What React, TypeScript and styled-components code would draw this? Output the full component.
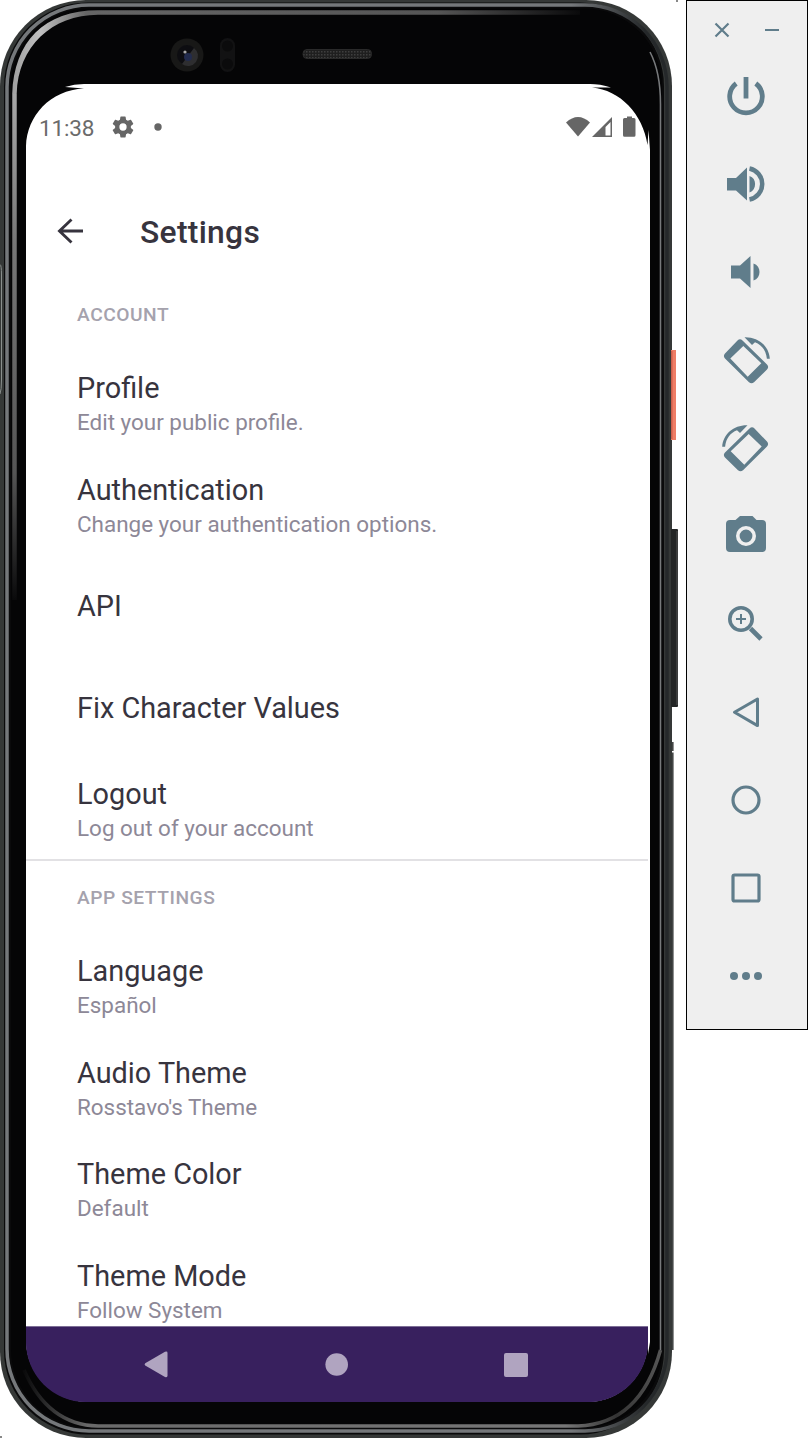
import React from "react";
import styled, { createGlobalStyle } from "styled-components";

const Global = createGlobalStyle`
  * { box-sizing: border-box; }
  body { margin: 0; background: #fff; font-family: Roboto, sans-serif; overflow: hidden; }
`;

const TEAL = "#607d8b";

const Page = styled.main`
  display: flex;
  align-items: flex-start;
  width: 808px;
  height: 1438px;
`;

const Phone = styled.section`
  position: relative;
  width: 686px;
  height: 1438px;
  padding: 84px 36px 36px 26px;
`;

const Skin = styled.svg`
  position: absolute;
  inset: 0;
`;

const Screen = styled.div`
  position: relative;
  display: flex;
  flex-direction: column;
  width: 622px;
  height: 1318px;
  border-radius: 62px 58px 60px 60px;
  overflow: hidden;
`;

const StatusBar = styled.div`
  display: flex;
  align-items: center;
  flex: none;
  height: 86px;
  padding: 0 11px 0 13px;
  color: #6b6b6b;
`;

const Clock = styled.span`
  width: 73px;
  font-size: 22.5px;
  letter-spacing: -0.15px;
  line-height: 28px;
  padding-top: 2px;
`;

const StatusIcons = styled.div`
  display: flex;
  align-items: center;
  margin-left: auto;
`;

const AppBar = styled.header`
  display: flex;
  align-items: center;
  flex: none;
  height: 106px;
  padding: 16px 0 0 29px;
  gap: 55px;
`;

const AppTitle = styled.h1`
  margin: 0;
  padding-top: 2px;
  color: #37343e;
  font-size: 31.8px;
  font-weight: 500;
  line-height: 40px;
  letter-spacing: 0.3px;
`;

const Content = styled.div`
  flex: 1;
  min-height: 0;
  overflow: hidden;
`;

const GroupTitle = styled.h2`
  display: flex;
  align-items: center;
  height: 76px;
  margin: 0;
  padding-left: 51px;
  color: #a5a2ad;
  font-size: 19.2px;
  font-weight: 500;
  letter-spacing: 0.54px;
`;

const Group = styled.section<{ $ruled?: boolean }>`
  border-top: ${(p) => (p.$ruled ? "2px solid #e2e1e4" : "none")};

  ${GroupTitle} {
    height: ${(p) => (p.$ruled ? "74px" : "76px")};
  }
`;

const Row = styled.div<{ $single?: boolean }>`
  display: flex;
  flex-direction: column;
  justify-content: center;
  height: 101.4px;
  padding: ${(p) => (p.$single ? "1.6px" : "3.4px")} 0 0 51px;
`;

const RowTitle = styled.span`
  color: #37343e;
  font-size: 28.85px;
  line-height: 36px;
`;

const RowNote = styled.span`
  color: #8d8897;
  font-size: 22.45px;
  line-height: 32px;
`;

const NavBar = styled.nav`
  display: flex;
  align-items: center;
  flex: none;
  height: 76px;
  padding: 0 0 0 118px;
  gap: 156px;
  background: #38205e;
  border-top: 1px solid #7d6f96;
`;

const Toolbar = styled.aside`
  display: flex;
  flex-direction: column;
  width: 122px;
  height: 1030px;
  background: #efefef;
  border: 1px solid #000;
`;

const WindowButtons = styled.div`
  display: flex;
  height: 51px;
  padding: 19px 0 0 25px;
  gap: 30px;
`;

const Tool = styled.button`
  display: flex;
  align-items: center;
  justify-content: center;
  width: 118px;
  height: 88px;
  padding: 0;
  border: 0;
  background: none;
`;

type Entry = { title: string; note?: string };

const account: Entry[] = [
  { title: "Profile", note: "Edit your public profile." },
  { title: "Authentication", note: "Change your authentication options." },
  { title: "API" },
  { title: "Fix Character Values" },
  { title: "Logout", note: "Log out of your account" },
];

const appSettings: Entry[] = [
  { title: "Language", note: "Español" },
  { title: "Audio Theme", note: "Rosstavo's Theme" },
  { title: "Theme Color", note: "Default" },
  { title: "Theme Mode", note: "Follow System" },
];

const Rows = ({ items }: { items: Entry[] }) => (
  <>
    {items.map((e) => (
      <Row key={e.title} $single={!e.note}>
        <RowTitle>{e.title}</RowTitle>
        {e.note && <RowNote>{e.note}</RowNote>}
      </Row>
    ))}
  </>
);

const DeviceSkin = () => (
  <Skin width="686" height="1438" viewBox="0 0 686 1438">
    <defs>
      <linearGradient id="topRim" gradientUnits="userSpaceOnUse" x1="12" y1="0" x2="580" y2="0">
        <stop offset="0" stopColor="#a0a0a0" />
        <stop offset="0.05" stopColor="#c0c0c0" />
        <stop offset="0.13" stopColor="#666" />
        <stop offset="0.75" stopColor="#555" />
        <stop offset="1" stopColor="#0a0a0b" />
      </linearGradient>
      <linearGradient id="leftRim" gradientUnits="userSpaceOnUse" x1="0" y1="90" x2="0" y2="600">
        <stop offset="0" stopColor="#a8a8a8" />
        <stop offset="0.3" stopColor="#777" />
        <stop offset="0.75" stopColor="#555" />
        <stop offset="1" stopColor="#0a0a0b" />
      </linearGradient>
      <linearGradient id="bottomRim" gradientUnits="userSpaceOnUse" x1="24" y1="0" x2="661" y2="0">
        <stop offset="0" stopColor="#0a0a0b" />
        <stop offset="0.1" stopColor="#6a6a6a" />
        <stop offset="0.85" stopColor="#777" />
        <stop offset="0.93" stopColor="#333" />
        <stop offset="1" stopColor="#555" />
      </linearGradient>
      <linearGradient id="metal" gradientUnits="userSpaceOnUse" x1="0" y1="0" x2="672" y2="0">
        <stop offset="0" stopColor="#75787b" />
        <stop offset="0.85" stopColor="#75787b" />
        <stop offset="0.96" stopColor="#25282a" />
        <stop offset="1" stopColor="#25282a" />
      </linearGradient>
      <pattern id="mesh" width="3" height="3" patternUnits="userSpaceOnUse">
        <rect width="3" height="3" fill="#1f1f1f" />
        <rect width="1.5" height="1.5" fill="#3e3e3e" />
      </pattern>
    </defs>
    <rect x="670" y="742" width="3.600" height="608" fill="#444746" />
    <rect x="672" y="751" width="2" height="1.500" fill="#fff" />
    <rect x="676" y="0" width="2" height="2" fill="#888" />
    <rect x="0" y="1436" width="2" height="2" fill="#888" />
    <rect x="0" y="0" width="672" height="1438" rx="86" fill="#353837" />
    <rect x="671" y="350" width="5" height="90" fill="#ee7d66" />
    <rect x="671" y="351" width="1.500" height="88" fill="#cc5f4a" />
    <rect x="671" y="529" width="7" height="178" rx="1" fill="#232525" />
    <rect x="676.500" y="531" width="1" height="174" fill="#555" />
    <path d="M0 264.500Q1.500 265 1.500 275V380Q1.500 390 0 394" fill="none" stroke="#8a8f8d" />
    <rect x="4" y="2.500" width="660" height="1432" rx="84" fill="#0a0a0b" />
    <rect x="7" y="5" width="660" height="1426" rx="82" fill="none" stroke="url(#metal)" strokeWidth="3.500" />
    <rect x="11" y="8.500" width="651" height="1419" rx="78" fill="#050506" />
    <path d="M14.500 600V94" fill="none" stroke="url(#leftRim)" strokeWidth="4.500" />
    <path
      d="M12.200 94C14 42 44 10.300 98 10.300H580V14.700H98C52 15 18 46 16.700 94Z"
      fill="url(#topRim)"
    />
    <path d="M650 52Q660.500 72 660.500 104V1350" fill="none" stroke="#77797b" strokeWidth="1.600" />
    <path d="M24 1370Q48 1425 98 1426H578Q640 1424 660.500 1350" fill="none" stroke="url(#bottomRim)" strokeWidth="3.500" />
    <circle cx="187" cy="55" r="16.500" fill="#181817" />
    <circle cx="187" cy="55" r="10" fill="#0d0d11" />
    <path d="M194 48a10 10 0 0 1-12 16z" fill="#2e2e30" />
    <circle cx="188" cy="57" r="4" fill="#222b4d" />
    <circle cx="185" cy="52" r="1.600" fill="#aaa" />
    <rect x="220" y="38" width="15" height="34" rx="7.500" fill="#121213" />
    <circle cx="227.500" cy="46" r="5.500" fill="#0b0b0c" />
    <circle cx="227.500" cy="64" r="5.500" fill="#0b0b0c" />
    <rect x="303" y="49.500" width="68.500" height="9" rx="4" fill="url(#mesh)" stroke="#2a2a2a" />
    <path
      d="M84 84H590C596 84 604 85 611 87.500H592C620 90 643 114 647.500 145L648.500 130L650 150V1342L648 1354V1340A60 62 0 0 1 588 1402H88A62 62 0 0 1 26 1340V146C27 116 50 90 84 88.500L65 87Q74 84 84 84Z"
      fill="#fff"
    />
    <path d="M300 1402H88A62 62 0 0 1 26 1340V1330H648V1340A60 62 0 0 1 588 1402Z" fill="#38205e" />
  </Skin>
);

const Icon = ({ size = 48, children }: { size?: number; children: React.ReactNode }) => (
  <svg width={size} height={size} viewBox={`0 0 ${size} ${size}`} fill={TEAL} stroke="none">
    {children}
  </svg>
);

const RotatedPhone = () => (
  <>
    <path
      fillRule="evenodd"
      d="M15.500 4.500Q18 2 20.500 4.500L45 28.500Q47.300 31 45 33.500L32 46.200Q29.500 48.500 27 46.200L3 22.500Q.800 20 3 17.500ZM21.300 10L8.300 22.500 25.700 40.700 39.300 27.300Z"
    />
    <path d="M22.500 1.200C36 .800 47 10 47.800 22.700H44.900C44 14 39.500 8.800 33 6.200L30 9Z" />
  </>
);

const tools: { name: string; art: React.ReactNode }[] = [
  {
    name: "Power",
    art: (
      <g fill="none" stroke={TEAL} strokeWidth="4.8">
        <path d="M14.200 11.500A16.300 16.300 0 1 0 33.800 11.500" />
        <path d="M24 5v21.500" />
      </g>
    ),
  },
  {
    name: "Volume up",
    art: (
      <>
        <path d="M5 18h9L25 7.500v33L14 30.500H5ZM27.500 16c7.500 2 7.500 14 0 16.500Z" />
        <path d="M27.500 8.500a15.800 15.800 0 0 1 0 31" fill="none" stroke={TEAL} strokeWidth="4.500" />
      </>
    ),
  },
  {
    name: "Volume down",
    art: <path d="M9 17.500h9L28.500 8v32L18 30.500H9ZM31.500 15.500c8 2.500 8 14.500 0 17Z" />,
  },
  { name: "Rotate left", art: <RotatedPhone /> },
  {
    name: "Rotate right",
    art: (
      <g transform="matrix(-1 0 0 1 48 0)">
        <RotatedPhone />
      </g>
    ),
  },
  {
    name: "Screenshot",
    art: (
      <path
        fillRule="evenodd"
        d="M18 4h12.500l4 4h5.500Q44 8 44 12v24Q44 40 40 40H8Q4 40 4 36V12Q4 8 8 8h5.500ZM24 14a10 10 0 1 0 0 20a10 10 0 1 0 0-20ZM24 17.600a6.400 6.400 0 1 1 0 12.800a6.400 6.400 0 1 1 0-12.800Z"
      />
    ),
  },
  {
    name: "Zoom",
    art: (
      <g fill="none" stroke={TEAL}>
        <circle cx="19" cy="19" r="11.200" strokeWidth="3.600" />
        <path d="M28.500 28.500L39 39" strokeWidth="4.600" />
        <path d="M19 14v10M14 19h10" strokeWidth="2" />
      </g>
    ),
  },
  {
    name: "Back",
    art: <path d="M12.500 24.300L35.500 11V37.600Z" fill="none" stroke={TEAL} strokeWidth="3" strokeLinejoin="round" />,
  },
  { name: "Home", art: <circle cx="24" cy="24" r="13" fill="none" stroke={TEAL} strokeWidth="3.200" /> },
  {
    name: "Overview",
    art: <rect x="11" y="11" width="26" height="26" rx="1.500" fill="none" stroke={TEAL} strokeWidth="3.200" />,
  },
  {
    name: "More",
    art: (
      <>
        <circle cx="12" cy="24" r="4" />
        <circle cx="24" cy="24" r="4" />
        <circle cx="36" cy="24" r="4" />
      </>
    ),
  },
];

export default function App() {
  return (
    <Page>
      <Global />
      <Phone>
        <DeviceSkin />
        <Screen>
          <StatusBar>
            <Clock>11:38</Clock>
            <svg width="22" height="22" viewBox="2 2 20 20" fill="#666">
              <path d="M19.140 12.940c.04-.3.06-.61.06-.94 0-.32-.02-.64-.07-.94l2.030-1.580c.18-.14.23-.41.12-.61l-1.920-3.320c-.12-.22-.37-.29-.59-.22l-2.390.96c-.5-.38-1.030-.7-1.620-.94l-.36-2.540c-.04-.24-.24-.41-.48-.41h-3.840c-.24 0-.43.17-.47.41l-.36 2.540c-.59.24-1.130.57-1.620.94l-2.390-.96c-.22-.08-.47 0-.59.22L2.740 8.870c-.12.21-.08.47.12.61l2.030 1.580c-.05.3-.09.63-.09.94s.02.64.07.94l-2.030 1.580c-.18.14-.23.41-.12.61l1.920 3.320c.12.22.37.29.59.22l2.390-.96c.5.38 1.030.7 1.620.94l.36 2.540c.05.24.24.41.48.41h3.840c.24 0 .44-.17.47-.41l.36-2.540c.59-.24 1.130-.56 1.620-.94l2.390.96c.22.08.47 0 .59-.22l1.920-3.320c.12-.22.07-.47-.12-.61zM12 15.300a3.300 3.300 0 1 1 0-6.600 3.300 3.300 0 0 1 0 6.600z" />
            </svg>
            <svg width="30" height="8" viewBox="0 0 30 8" fill="#666">
              <circle cx="24" cy="4" r="3.700" />
            </svg>
            <StatusIcons>
              <svg width="72" height="22" viewBox="0 0 72 22" fill="#666">
                <path d="M1 6.500Q13-4.500 25 6.500L13 20.500Z" />
                <path fillRule="evenodd" d="M47 1v20H27ZM45.500 6L40.500 11V19.500H45.500Z" />
                <path d="M62 2V.5h5V2h2q1.500 0 1.500 1.500v15.800q0 1.500-1.500 1.500H59.500q-1.500 0-1.500-1.500V3.500Q58 2 59.500 2Z" />
              </svg>
            </StatusIcons>
          </StatusBar>
          <AppBar>
            <svg width="30" height="30" viewBox="0 0 30 30" fill="none" stroke="#37343e" strokeWidth="2.900">
              <path d="M28 15H4.500M16.500 3.500L4.500 15L16.500 26.500" />
            </svg>
            <AppTitle>Settings</AppTitle>
          </AppBar>
          <Content>
            <Group>
              <GroupTitle>ACCOUNT</GroupTitle>
              <Rows items={account} />
            </Group>
            <Group $ruled>
              <GroupTitle>APP SETTINGS</GroupTitle>
              <Rows items={appSettings} />
            </Group>
          </Content>
          <NavBar>
            <svg width="24" height="27" viewBox="0 0 24 27" fill="#b0a4c0">
              <path d="M1.200 12.200L21 .8Q23.500 0 23.500 2V24.500Q23.500 27 21 26L1.200 14.600Q0 13.400 1.200 12.200Z" />
            </svg>
            <svg width="24" height="24" viewBox="0 0 24 24" fill="#b0a4c0">
              <circle cx="12.700" cy="11.500" r="11.300" />
            </svg>
            <svg width="24" height="24" viewBox="0 0 24 24" fill="#b0a4c0">
              <rect width="24" height="24" rx="2" />
            </svg>
          </NavBar>
        </Screen>
      </Phone>
      <Toolbar>
        <WindowButtons>
          <svg width="20" height="20" viewBox="0 0 20 20" stroke={TEAL} strokeWidth="2.200">
            <path d="M3.500 3.500l13 13M16.500 3.500l-13 13" />
          </svg>
          <svg width="20" height="20" viewBox="0 0 20 20" stroke={TEAL} strokeWidth="2">
            <path d="M3 10h14" />
          </svg>
        </WindowButtons>
        {tools.map((t) => (
          <Tool key={t.name} aria-label={t.name}>
            <Icon>{t.art}</Icon>
          </Tool>
        ))}
      </Toolbar>
    </Page>
  );
}
